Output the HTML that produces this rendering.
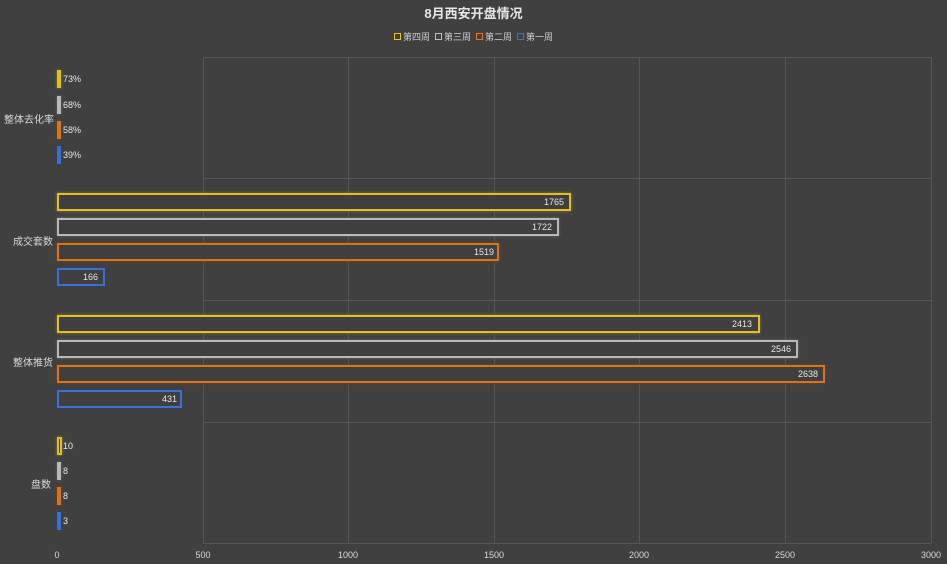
<!DOCTYPE html><html><head><meta charset="utf-8"><style>
body{margin:0;background:#404040;}
#c{position:relative;width:947px;height:564px;background:#404040;overflow:hidden;font-family:"Liberation Sans","Noto Sans CJK SC",sans-serif;color:#d9d9d9}
.a{position:absolute}
.b{position:absolute;height:14px;border:2px solid;background:#3f3f3f;box-sizing:content-box}
.y{border-color:#e0c020;box-shadow:0 0 3px #8a7a20}.g{border-color:#b8b8b8;box-shadow:0 0 3px #666}.o{border-color:#d87420;box-shadow:0 0 3px #804010}.u{border-color:#3d6fd0;box-shadow:0 0 3px #2a4070}
.t{position:absolute;font-size:9px;color:#e6e6e6;line-height:19px}
.cat{position:absolute;font-size:10px;color:#d9d9d9}
.vl{position:absolute;top:57px;width:1px;height:486px;background:#555}
.hl{position:absolute;left:203px;width:728px;height:1px;background:#555}
.x{position:absolute;top:550px;font-size:9px;color:#d9d9d9;transform:translateX(-50%)}
.lg{display:inline-block;width:5px;height:5px;border:1px solid;margin-right:2px;vertical-align:0}
</style></head><body><div id="c">
<div class="a" style="left:0;width:947px;top:3px;text-align:center;font-size:13px;font-weight:bold;color:#e6e6e6">8月西安开盘情况</div>
<div class="a" style="left:394px;top:30px;font-size:9px;color:#cfcfcf;white-space:nowrap;word-spacing:0">
<span class="lg" style="border-color:#e8c619"></span>第四周&nbsp;&nbsp;<span class="lg" style="border-color:#bdbdbd"></span>第三周&nbsp;&nbsp;<span class="lg" style="border-color:#e07a20"></span>第二周&nbsp;&nbsp;<span class="lg" style="border-color:#3d6fd0"></span>第一周</div>
<div class="vl" style="left:203px"></div><div class="vl" style="left:348px"></div><div class="vl" style="left:494px"></div><div class="vl" style="left:639px"></div><div class="vl" style="left:785px"></div><div class="vl" style="left:931px"></div>
<div class="hl" style="top:57px"></div><div class="hl" style="top:178px"></div><div class="hl" style="top:300px"></div><div class="hl" style="top:422px"></div><div class="hl" style="top:543px"></div>
<div class="cat" style="left:4px;top:111px">整体去化率</div>
<div class="cat" style="left:13px;top:233px">成交套数</div>
<div class="cat" style="left:13px;top:354px">整体推货</div>
<div class="cat" style="left:31px;top:476px">盘数</div>
<div class="b y" style="left:57px;top:70px;width:0px"></div><div class="t" style="left:63px;top:70px">73%</div>
<div class="b g" style="left:57px;top:96px;width:0px"></div><div class="t" style="left:63px;top:96px">68%</div>
<div class="b o" style="left:57px;top:121px;width:0px"></div><div class="t" style="left:63px;top:121px">58%</div>
<div class="b u" style="left:57px;top:146px;width:0px"></div><div class="t" style="left:63px;top:146px">39%</div>
<div class="b y" style="left:57px;top:193px;width:510px"></div><div class="t" style="left:526px;width:38px;text-align:right;top:193px">1765</div>
<div class="b g" style="left:57px;top:218px;width:498px"></div><div class="t" style="left:514px;width:38px;text-align:right;top:218px">1722</div>
<div class="b o" style="left:57px;top:243px;width:438px"></div><div class="t" style="left:456px;width:38px;text-align:right;top:243px">1519</div>
<div class="b u" style="left:57px;top:268px;width:44px"></div><div class="t" style="left:60px;width:38px;text-align:right;top:268px">166</div>
<div class="b y" style="left:57px;top:315px;width:699px"></div><div class="t" style="left:714px;width:38px;text-align:right;top:315px">2413</div>
<div class="b g" style="left:57px;top:340px;width:737px"></div><div class="t" style="left:753px;width:38px;text-align:right;top:340px">2546</div>
<div class="b o" style="left:57px;top:365px;width:764px"></div><div class="t" style="left:780px;width:38px;text-align:right;top:365px">2638</div>
<div class="b u" style="left:57px;top:390px;width:121px"></div><div class="t" style="left:139px;width:38px;text-align:right;top:390px">431</div>
<div class="b y" style="left:57px;top:437px;width:1px"></div><div class="t" style="left:63px;top:437px">10</div>
<div class="b g" style="left:57px;top:462px;width:0px"></div><div class="t" style="left:63px;top:462px">8</div>
<div class="b o" style="left:57px;top:487px;width:0px"></div><div class="t" style="left:63px;top:487px">8</div>
<div class="b u" style="left:57px;top:512px;width:0px"></div><div class="t" style="left:63px;top:512px">3</div>
<div class="x" style="left:57px">0</div><div class="x" style="left:203px">500</div><div class="x" style="left:348px">1000</div><div class="x" style="left:494px">1500</div><div class="x" style="left:639px">2000</div><div class="x" style="left:785px">2500</div><div class="x" style="left:931px">3000</div>
</div></body></html>
